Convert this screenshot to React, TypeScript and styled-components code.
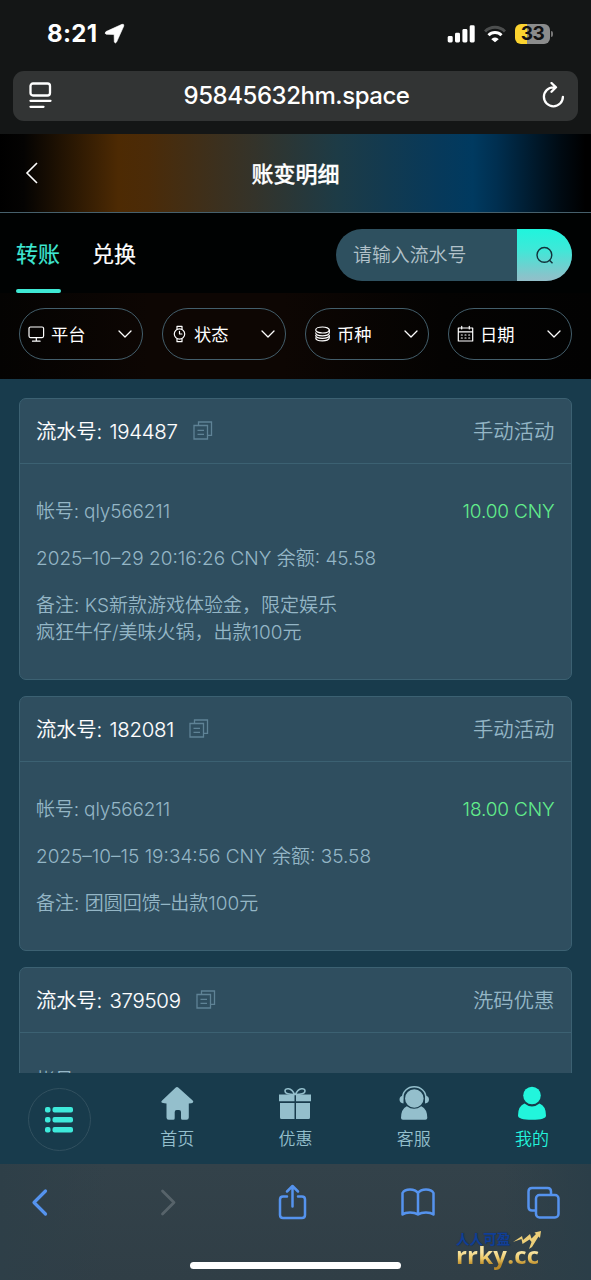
import React from "react";
import styled, { createGlobalStyle } from "styled-components";

const GlobalStyle = createGlobalStyle`
  * { box-sizing: border-box; }
  body { margin: 0; background: #163a4b; }
`;

const Screen = styled.div`
  width: 591px;
  height: 1280px;
  display: flex;
  flex-direction: column;
  overflow: hidden;
  position: relative;
  font-family: Inter, "Noto Sans CJK SC", sans-serif;
  background: #163a4b;
  white-space: nowrap;
`;

const BrowserTop = styled.div`
  flex: none;
  height: 134px;
  background: #141616;
  color: #fff;
`;

const StatusBar = styled.div`
  height: 70.5px;
  padding: 0 38px 3px 47px;
  display: flex;
  align-items: center;
`;

const Clock = styled.span`
  font-size: 24px;
  font-weight: 700;
  letter-spacing: 0.3px;
  line-height: 30px;
  width: 57px;
`;

const StatusIcons = styled.div`
  margin-left: auto;
  display: flex;
  align-items: center;
  gap: 9px;
`;

const Battery = styled.div`
  position: relative;
  width: 35px;
  height: 20px;
  border-radius: 6px;
  margin-right: 3px;
  background: linear-gradient(90deg, #fbd32f 12px, #8b8c8c 12px);
  color: #111;
  font-size: 19px;
  font-weight: 700;
  letter-spacing: -0.5px;
  line-height: 20px;
  text-align: center;
  &::after {
    content: "";
    position: absolute;
    right: -3px;
    top: 7px;
    width: 2px;
    height: 6px;
    border-radius: 0 2px 2px 0;
    background: #777;
  }
`;

const AddressBar = styled.div`
  margin: 0 13px;
  height: 50px;
  border-radius: 11px;
  background: #323434;
  display: flex;
  align-items: center;
  justify-content: space-between;
  padding: 0 13px 0 16px;
`;

const Address = styled.span`
  font-size: 24px;
  font-weight: 500;
  letter-spacing: -0.45px;
  line-height: 30px;
`;

const PageHeader = styled.header`
  flex: none;
  height: 79px;
  border-bottom: 1px solid #46606c;
  display: grid;
  grid-template-columns: 60px 1fr 60px;
  align-items: center;
  background: linear-gradient(90deg, #000 0%, #040302 4%, #4d2a03 20%, #4b2b08 25%, #34332a 43%, #1d3b46 57%, #07395a 74%, #003a60 80%, #002f50 84%, #000a12 95%, #000 99%);
`;

const PageTitle = styled.h1`
  margin: 0;
  padding-top: 2px;
  font-size: 22px;
  font-weight: 500;
  -webkit-text-stroke: 0.3px currentColor;
  line-height: 30px;
  text-align: center;
  color: #fff;
`;

const BackIcon = styled.svg`
  margin-left: 24px;
  display: block;
`;

const TabBar = styled.div`
  flex: none;
  height: 80px;
  background: #000202;
  display: flex;
  padding: 0 19px 0 16px;
`;

const Tab = styled.div<{ $active?: boolean }>`
  width: 45px;
  margin-right: 31px;
  padding-top: 25px;
  display: flex;
  flex-direction: column;
  justify-content: space-between;
  font-size: 22px;
  line-height: 32px;
  -webkit-text-stroke: 0.2px currentColor;
  color: ${(p) => (p.$active ? "#3fe8d4" : "#fff")};
  &::after {
    content: "";
    height: 4px;
    border-radius: 2px;
    background: ${(p) => (p.$active ? "#3fe8d4" : "transparent")};
  }
`;

const SearchBox = styled.div`
  margin: 16px 0 0 auto;
  width: 236px;
  height: 52px;
  border-radius: 26px;
  overflow: hidden;
  display: flex;
  background: #2e505f;
`;

const SearchHint = styled.span`
  flex: 1;
  padding-left: 17px;
  font-size: 18.9px;
  font-weight: 350;
  line-height: 54px;
  color: #b2c2ca;
`;

const SearchButton = styled.button`
  width: 55px;
  border: 0;
  padding: 0;
  background: linear-gradient(#1ff5dd 0%, #3fe8d8 40%, #88c4cb 90%, #93bfc9 100%);
  display: flex;
  align-items: center;
  justify-content: center;
`;

const FilterBar = styled.div`
  flex: none;
  height: 86px;
  padding: 15px 19px 0;
  display: flex;
  gap: 19px;
  background: linear-gradient(90deg, #040302 0%, #0d0603 25%, #0d0603 48%, #040302 75%, #020202 100%);
`;

const Chip = styled.button`
  flex: 1;
  height: 52px;
  border: 1px solid #435e6b;
  border-radius: 26px;
  background: transparent;
  color: #fff;
  font: inherit;
  font-size: 17.3px;
  line-height: 26px;
  padding: 0 10px 0 8px;
  display: flex;
  align-items: center;
`;

const ChipLabel = styled.span`
  margin-left: 6px;
  padding-top: 1.5px;
  flex: 1;
  text-align: left;
`;

const List = styled.main`
  flex: none;
  height: 694px;
  overflow: hidden;
  padding: 19px 19px 0;
  background: #183b4c;
`;

const Card = styled.article`
  border: 1px solid #3c6172;
  border-radius: 7px;
  background: #2f4e5f;
  margin-bottom: 16px;
`;

const CardHead = styled.div`
  height: 65px;
  border-bottom: 1px solid #3c6172;
  padding: 0 16.5px 0 16px;
  display: flex;
  align-items: center;
  font-size: 20.4px;
  font-weight: 350;
  line-height: 30px;
  color: #fff;
`;

const Serial = styled.span`
  padding-top: 1.5px;
  letter-spacing: -0.25px;
  word-spacing: 2px;
  -webkit-text-stroke: 0.1px currentColor;
`;

const CopyIcon = styled.svg`
  display: block;
  margin-left: 15px;
`;

const Kind = styled.span`
  margin-left: auto;
  padding-top: 1.5px;
  color: #94b6c6;
`;

const CardBody = styled.div`
  padding: 34px 16.5px 32.5px 16px;
  display: flex;
  flex-direction: column;
  gap: 19.5px;
  font-size: 19px;
  font-weight: 350;
  line-height: 27.4px;
  color: #94b6c6;
`;

const Line = styled.div`
  display: flex;
  justify-content: space-between;
`;

const Account = styled.span`
  letter-spacing: -0.15px;
`;

const Note = styled.div`
  white-space: pre;
`;

const Amount = styled.span`
  color: #62ed8b;
  letter-spacing: -0.15px;
`;

const NavBar = styled.nav`
  flex: none;
  height: 91px;
  background: #183b4c;
  display: grid;
  grid-template-columns: repeat(5, 1fr);
`;

const MenuButton = styled.div`
  width: 63px;
  height: 63px;
  margin: 14.5px 0 0 27.5px;
  padding-top: 2px;
  border: 1px solid #31505f;
  border-radius: 50%;
  display: flex;
  align-items: center;
  justify-content: center;
`;

const NavItem = styled.div<{ $active?: boolean }>`
  display: flex;
  flex-direction: column;
  align-items: center;
  padding-top: 13px;
  font-size: 17px;
  font-weight: 350;
  line-height: 24px;
  gap: 6px;
  color: ${(p) => (p.$active ? "#22f5dc" : "#94bfcc")};
`;

const BrowserBottom = styled.div`
  flex: none;
  height: 116px;
  background: linear-gradient(90deg, #2e3f48 0%, #30404a00 18%, #30404a00 85%, #2b3e48 100%), linear-gradient(#33424a, #303e46);
  display: flex;
  flex-direction: column;
  align-items: center;
  justify-content: space-between;
  padding: 18px 30px 11px;
`;

const Tools = styled.div`
  width: 100%;
  display: grid;
  grid-template-columns: 127px 120px 123px 126px 34px;
  color: #5593ee;
`;

const HomeIndicator = styled.div`
  width: 211px;
  height: 7px;
  border-radius: 4px;
  background: #fff;
`;

const Watermark = styled.div`
  position: absolute;
  left: 456px;
  top: 1230px;
  width: 90px;
`;

const MarkTop = styled.div`
  display: flex;
  height: 16px;
  font-size: 13.6px;
  line-height: 18px;
  font-weight: 700;
  color: #123f96;
  text-shadow: 0 0 1px #0c2550;
`;

const MarkArrow = styled.svg`
  flex: none;
`;

const MarkSite = styled.div`
  font-family: "Open Sans", sans-serif;
  font-size: 24px;
  font-weight: 700;
  line-height: 17px;
  padding-bottom: 8px;
  letter-spacing: 0.2px;
  color: transparent;
  background: linear-gradient(#f7e3a0 25%, #ecc765 50%, #b98a2a 75%);
  -webkit-background-clip: text;
  background-clip: text;
`;

const stroke = {
  fill: "none",
  stroke: "currentColor",
  strokeLinecap: "round" as const,
  strokeLinejoin: "round" as const,
};

const chipIcons = {
  monitor: (
    <svg width="17" height="18" viewBox="0 0 17 18" {...stroke} strokeWidth="1.2">
      <rect x="1" y="2" width="14.6" height="10.6" rx="1.5" />
      <path d="M8.3 12.8v3M4.5 16.2h7.6" />
    </svg>
  ),
  watch: (
    <svg width="17" height="18" viewBox="0 0 17 18" {...stroke} strokeWidth="1.2">
      <circle cx="8.5" cy="9" r="5.2" />
      <path d="M6 4.2V1.3h5v2.9M6 13.8v2.9h5v-2.9M8.5 6.3V9h2.4" />
    </svg>
  ),
  coins: (
    <svg width="17" height="18" viewBox="0 0 17 18" {...stroke} strokeWidth="1.2">
      <ellipse cx="8.5" cy="5" rx="6.8" ry="3" />
      <path d="M1.7 7.8c0 4.1 13.6 4.1 13.6 0V5M1.7 12.8c0 4.2 13.6 4.2 13.6 0v-2.5M1.7 10.3c0 4.1 13.6 4.1 13.6 0" />
    </svg>
  ),
  calendar: (
    <svg width="17" height="18" viewBox="0 0 17 18" {...stroke} strokeWidth="1.2">
      <path d="M1.3 3h14.4v13H1.3zM1.3 6.8h14.4M4.7 1.3V4M12.3 1.3V4" />
      <path d="M4.3 10h1M8 10h1M11.7 10h1M4.3 13h1M8 13h1M11.7 13h1" />
    </svg>
  ),
};

const filters: { icon: keyof typeof chipIcons; label: string }[] = [
  { icon: "monitor", label: "平台" },
  { icon: "watch", label: "状态" },
  { icon: "coins", label: "币种" },
  { icon: "calendar", label: "日期" },
];

const records = [
  {
    serial: "194487",
    kind: "手动活动",
    amount: "10.00 CNY",
    time: "2025–10–29 20:16:26 CNY 余额: 45.58",
    note: "备注: KS新款游戏体验金，限定娱乐\n疯狂牛仔/美味火锅，出款100元",
  },
  {
    serial: "182081",
    kind: "手动活动",
    amount: "18.00 CNY",
    time: "2025–10–15 19:34:56 CNY 余额: 35.58",
    note: "备注: 团圆回馈–出款100元",
  },
  { serial: "379509", kind: "洗码优惠", amount: "1.00 CNY" },
];

export default function App() {
  return (
    <Screen>
      <GlobalStyle />
      <BrowserTop>
        <StatusBar>
          <Clock>8:21</Clock>
          <svg width="21" height="21" viewBox="0 0 21 21">
            <path d="M2 8.6 18 1.3q2.3-.6 1.8 1.7L12.6 19q-1.3 2-2.3 0l-.2-7.5-7.8-.2Q0 10.5 2 8.6Z" fill="#fff" stroke="#fff" strokeWidth="0.6" strokeLinejoin="round" />
          </svg>
          <StatusIcons>
            <svg width="28" height="18" viewBox="0 0 28 18" fill="#fff">
              <rect x="0.7" y="11" width="5" height="6.5" rx="1.4" />
              <rect x="8" y="7.8" width="5" height="9.7" rx="1.4" />
              <rect x="15.4" y="4" width="5" height="13.5" rx="1.4" />
              <rect x="22.7" y="0.3" width="5" height="17.2" rx="1.4" />
            </svg>
            <svg width="22" height="18" viewBox="1 0 22 18" fill="none" strokeWidth="3">
              <path d="M2 6.5a14 14 0 0 1 20 0" stroke="#4c4e4e" />
              <path d="M5.5 10.2a9.2 9.2 0 0 1 13 0" stroke="#fff" />
              <path d="M9.5 14.2a4.2 4.2 0 0 1 5 0L12 16.3Z" fill="#fff" stroke="#fff" strokeWidth="1.5" />
            </svg>
            <Battery>33</Battery>
          </StatusIcons>
        </StatusBar>
        <AddressBar>
          <svg width="23" height="27" viewBox="0 0 23 27" {...stroke} strokeWidth="2.3">
            <rect x="1.5" y="1.5" width="19.5" height="12" rx="2.5" />
            <path d="M1.5 18.8h20M1.5 24.8h13" />
          </svg>
          <Address>95845632hm.space</Address>
          <svg width="24" height="27" viewBox="0 0 24 27" {...stroke} strokeWidth="2.3">
            <path d="M14.5 5.3H12.4a9.5 9.5 0 1 0 9.5 9.5M10.5 1l4.5 4.3-4.5 4.5" />
          </svg>
        </AddressBar>
      </BrowserTop>

      <PageHeader>
        <BackIcon width="16" height="22" viewBox="0 0 16 22" fill="none" stroke="#fff" strokeWidth="1.6">
          <path d="M13 1 3 11l10 10" />
        </BackIcon>
        <PageTitle>账变明细</PageTitle>
      </PageHeader>

      <TabBar>
        <Tab $active>转账</Tab>
        <Tab>兑换</Tab>
        <SearchBox>
          <SearchHint>请输入流水号</SearchHint>
          <SearchButton>
            <svg width="18" height="18" viewBox="0 0 18 18" fill="none" stroke="#12313a" strokeWidth="1.4">
              <circle cx="8.4" cy="8.9" r="7.4" />
              <path d="m13.5 14.3 3 3" />
            </svg>
          </SearchButton>
        </SearchBox>
      </TabBar>

      <FilterBar>
        {filters.map((f) => (
          <Chip key={f.label}>
            {chipIcons[f.icon]}
            <ChipLabel>{f.label}</ChipLabel>
            <svg width="14" height="9" viewBox="0 0 14 9" {...stroke} strokeWidth="1.3">
              <path d="m1 1 6 6 6-6" />
            </svg>
          </Chip>
        ))}
      </FilterBar>

      <List>
        {records.map((r) => (
          <Card key={r.serial}>
            <CardHead>
              <Serial>流水号: {r.serial}</Serial>
              <CopyIcon width="20" height="20" viewBox="0 0 20 20" fill="none" stroke="#5f8396" strokeWidth="1.3">
                <path d="M1 4.5h13.5V18H1zM5.5 4.5V1h13v13.3h-4M4.5 9.3H11M4.5 13.3H11" />
              </CopyIcon>
              <Kind>{r.kind}</Kind>
            </CardHead>
            <CardBody>
              <Line>
                <Account>帐号: qly566211</Account>
                <Amount>{r.amount}</Amount>
              </Line>
              {r.time && <Line>{r.time}</Line>}
              {r.note && <Note>{r.note}</Note>}
            </CardBody>
          </Card>
        ))}
      </List>

      <NavBar>
        <MenuButton>
          <svg width="28" height="26" viewBox="0 0 28 26" fill="#3eeadb">
            {[0, 10, 20].map((y) => (
              <g key={y}>
                <rect x="0" y={y} width="5.5" height="5.6" rx="2" />
                <rect x="7.5" y={y} width="20.5" height="5.6" rx="2" />
              </g>
            ))}
          </svg>
        </MenuButton>
        <NavItem>
          <svg width="34" height="35" viewBox="0 0 34 35" fill="currentColor">
            <path d="M15.5 1.8q1.5-1.5 3 0L32.7 14.6q1.3 1.4 0 2.2-.8.6-3.9.6V31.5q0 2.3-2.3 2.3h-4q-1.5 0-1.5-1.5V26q0-2-2-2h-2.3q-2 0-2 2v6.3q0 1.5-1.5 1.5h-4.5q-2.2 0-2.2-2.3V17.4q-4.3 0-4.9-.8-.8-.8.5-2Z" />
          </svg>
          首页
        </NavItem>
        <NavItem>
          <svg width="34" height="35" viewBox="0 0 34 35" fill="currentColor">
            <path d="M1 8.5h15.5v6.7H1ZM18 8.5h15v6.7H18ZM2 17h14.5v16H3.5Q2 33 2 31.5ZM18 17h14v14.5q0 1.5-1.4 1.5H18Z" />
            <path d="M16.7 8.5C11 8.5 7 8 7 5S13 .8 16.7 8.5ZM17.3 8.5c5.7 0 9.7-.5 9.700-3.500S21 .8 17.300 8.500Z" fill="none" stroke="currentColor" strokeWidth="1.6" />
          </svg>
          优惠
        </NavItem>
        <NavItem>
          <svg width="34" height="35" viewBox="0 0 34 35" fill="currentColor">
            <circle cx="17.3" cy="12.5" r="9.3" />
            <path d="M5.5 13.5C4.5-3.5 30-3.5 29 13.5" fill="none" stroke="currentColor" strokeWidth="1.5" />
            <path d="M6.5 9.5v8Q2.5 17 2.5 13.5T6.5 9.5ZM28 9.5v8q4-.5 4-4t-4-4ZM9.8 20.2q7.2 5.3 14.5 0Q30.3 23 30.3 32q0 1.8-2 1.8H6q-2 0-2-1.8 0-9 5.8-11.8Z" />
          </svg>
          客服
        </NavItem>
        <NavItem $active>
          <svg width="34" height="35" viewBox="0 0 34 35" fill="currentColor">
            <circle cx="17" cy="9.5" r="8.8" />
            <path d="M9.5 17.5q7.5 6 15 0Q31 20 31 29.5q0 4.3-14 4.3T3 29.5Q3 20 9.5 17.5Z" />
          </svg>
          我的
        </NavItem>
      </NavBar>

      <BrowserBottom>
        <Tools>
          <svg width="20" height="40" viewBox="0 0 20 40" {...stroke} strokeWidth="3.2">
            <path d="M15.5 9 4 20.5 15.5 32" />
          </svg>
          <svg width="20" height="40" viewBox="0 0 20 40" {...stroke} stroke="#57636a" strokeWidth="2.8">
            <path d="M5.5 9 17 20.5 5.5 32" />
          </svg>
          <svg width="30" height="40" viewBox="0 0 30 40" {...stroke} strokeWidth="2.5">
            <path d="M10 14.5H6q-3 0-3 3V33q0 3 3 3h19q3 0 3-3V17.5q0-3-3-3h-4M15.5 24.5V4.5M10 9.500l5.500-5.500L21 9.500" />
          </svg>
          <svg width="36" height="40" viewBox="0 0 36 40" {...stroke} strokeWidth="2.5">
            <path d="M18 11Q15.500 7.500 10 7.500T2.500 11V32.500Q5 30.500 10 30.500T18 32.500Q21 30.500 26 30.500T33.500 32.500V11Q31.500 7.500 26 7.500T18 11V32.500" />
          </svg>
          <svg width="34" height="40" viewBox="0 0 34 40" {...stroke} strokeWidth="2.5">
            <path d="M9 28.500H6q-3.500 0-3.500-3.500V9.500Q2.500 6 6 6h15.500Q25 6 25 9.500V12" />
            <rect x="10" y="13" width="22.500" height="22.500" rx="3.500" />
          </svg>
        </Tools>
        <HomeIndicator />
      </BrowserBottom>

      <Watermark>
        <MarkTop>
          人人可盈
          <MarkArrow width="32" height="20" viewBox="0 0 32 20">
            <path d="m3 12 9-6 1 4 7-6 1.500 4.500L26 4l-1.500-1.500L31 1l-1 7-1.500-1.500L22 17l-3 2 2.500-7-2-2.500L12.500 14l-1-5Z" fill="#edcf79" />
          </MarkArrow>
        </MarkTop>
        <MarkSite>rrky.cc</MarkSite>
      </Watermark>
    </Screen>
  );
}
